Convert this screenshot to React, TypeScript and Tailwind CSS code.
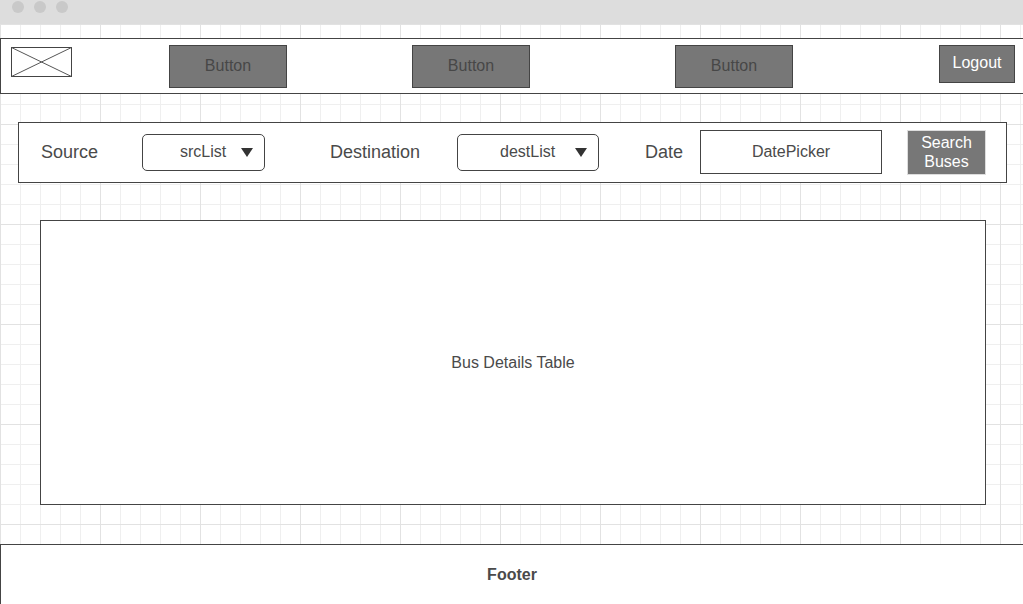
import type { ReactNode } from "react";

function Caret() {
  return (
    <svg width="12" height="9" viewBox="0 0 12 9" className="shrink-0">
      <path d="M0 0H12L6 9Z" fill="#333333" />
    </svg>
  );
}

function NavButton({ children }: { children: ReactNode }) {
  return (
    <div className="mt-[6px] flex h-[43px] w-[118px] items-center justify-center border border-[#444444] bg-[#777777] pb-[1px] text-[16px] text-[#474747]">
      {children}
    </div>
  );
}

function Select({ label, pl, gap, width }: { label: string; pl: string; gap: string; width: string }) {
  return (
    <div className={`flex h-[37px] items-center rounded-[5px] border border-[#444444] text-[16px] text-[#4a4a4a] ${pl} ${width}`}>
      <span>{label}</span>
      <span className={gap}>
        <Caret />
      </span>
    </div>
  );
}

export default function App() {
  return (
    <div className="flex h-screen w-full flex-col overflow-hidden bg-white font-['Liberation_Sans',Arial,sans-serif] text-[#4a4a4a]">
      {/* window chrome */}
      <div className="flex h-6 shrink-0 items-start gap-[10px] bg-[#dddddd] pl-3 pt-[1px]">
        <span className="size-3 rounded-full bg-[#c9c9c9]" />
        <span className="size-3 rounded-full bg-[#c9c9c9]" />
        <span className="size-3 rounded-full bg-[#c9c9c9]" />
      </div>

      {/* canvas */}
      <div className="flex flex-1 flex-col bg-white bg-[linear-gradient(to_right,#e2e2e2_1px,transparent_1px),linear-gradient(to_bottom,#e2e2e2_1px,transparent_1px),linear-gradient(to_right,#efefef_1px,transparent_1px),linear-gradient(to_bottom,#efefef_1px,transparent_1px)] bg-[size:100px_100px,100px_100px,20px_20px,20px_20px]">
        {/* header */}
        <header className="mt-[14px] flex h-[56px] shrink-0 items-start border border-r-0 border-[#444444] bg-white">
          <svg width="61" height="30" viewBox="0 0 61 30" className="ml-[10px] mt-[8px]">
            <rect x="0.5" y="0.5" width="60" height="29" fill="white" stroke="#444444" />
            <path d="M0.5 0.5L60.5 29.5M60.5 0.5L0.5 29.5" stroke="#555555" strokeWidth="1" />
          </svg>
          <div className="ml-[97px]">
            <NavButton>Button</NavButton>
          </div>
          <div className="ml-[125px]">
            <NavButton>Button</NavButton>
          </div>
          <div className="ml-[145px]">
            <NavButton>Button</NavButton>
          </div>
          <div className="ml-[146px] mt-[6px] flex h-[38px] w-[76px] items-center justify-center border border-[#444444] bg-[#777777] pb-[2px] text-[16px] text-white">
            Logout
          </div>
        </header>

        {/* search bar */}
        <section className="ml-[18px] mt-[28px] flex h-[61px] w-[989px] shrink-0 items-center border border-[#444444] bg-white pb-[1px] pl-[22px]">
          <span className="w-[101px] text-[18px]">Source</span>
          <Select label="srcList" pl="pl-[37px]" gap="ml-[15px]" width="w-[123px]" />
          <span className="ml-[65px] w-[127px] text-[18px]">Destination</span>
          <Select label="destList" pl="pl-[42px]" gap="ml-[20px]" width="w-[142px]" />
          <span className="ml-[46px] w-[55px] text-[18px]">Date</span>
          <div className="flex h-[44px] w-[182px] items-center justify-center border border-[#444444] text-[16px]">
            DatePicker
          </div>
          <div className="ml-[25px] flex h-[45px] w-[79px] flex-col items-center justify-center border border-[#dddddd] bg-[#777777] text-[16px] leading-[19px] text-white">
            <span>Search</span>
            <span>Buses</span>
          </div>
        </section>

        {/* table */}
        <section className="ml-[40px] mt-[37px] flex h-[285px] w-[946px] shrink-0 items-center justify-center border border-[#444444] bg-white text-[16px]">
          Bus Details Table
        </section>

        {/* footer */}
        <footer className="mt-[39px] flex flex-1 items-center justify-center border-l border-t border-[#444444] bg-white text-[16px] font-bold">
          Footer
        </footer>
      </div>
    </div>
  );
}
